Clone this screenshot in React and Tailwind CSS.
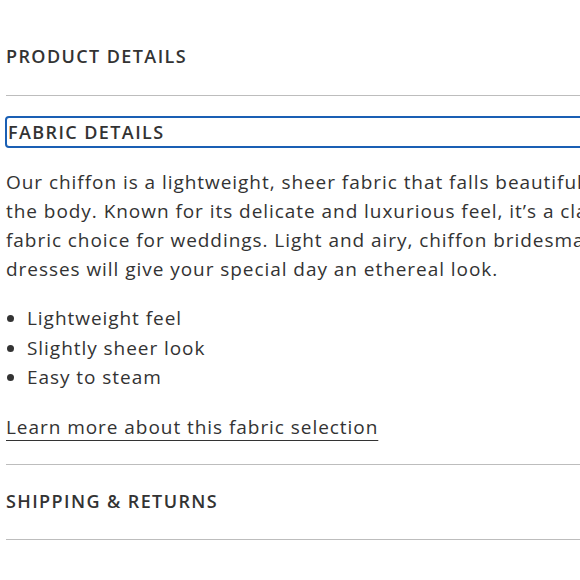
import React from "react";

const heading = "text-[18px] leading-[24px] font-semibold tracking-[1.4px] text-[#333]";

const App = () => {
    return (
        <div className="w-[580px] h-[580px] overflow-hidden bg-white" style={{ fontFamily: "'Open Sans', sans-serif" }}>
            <div className="w-[660px] pl-[6px]">
                <div className="pt-[44px] pb-[27px] border-b border-[#bdbdbd]">
                    <h2 className={heading}>PRODUCT DETAILS</h2>
                </div>

                <div className="pt-[20px]">
                    <button className="w-full text-left -ml-[1px] pl-[1px] h-[32px] border-2 border-[#1a5fb4] rounded-[4px] flex items-center">
                        <span className={heading}>FABRIC DETAILS</span>
                    </button>
                </div>

                <div className="pt-[20px] pb-[22px] border-b border-[#bdbdbd] text-[19px] leading-[29px] tracking-[0.95px] text-[#333]">
                    <p>
                        Our chiffon is a lightweight, sheer fabric that falls beautifully on<br />
                        the body. Known for its delicate and luxurious feel, it’s a classic<br />
                        fabric choice for weddings. Light and airy, chiffon bridesmaid<br />
                        dresses will give your special day an ethereal look.
                    </p>
                    <ul className="mt-[20px] list-disc pl-[21px] leading-[29.5px]">
                        <li>Lightweight feel</li>
                        <li>Slightly sheer look</li>
                        <li>Easy to steam</li>
                    </ul>
                    <a href="#" className="inline-block mt-[20px] underline underline-offset-[6px] decoration-[1px]">
                        Learn more about this fabric selection
                    </a>
                </div>

                <div className="pt-[24px] pb-[26px] border-b border-[#bdbdbd]">
                    <h2 className={heading}>SHIPPING &amp; RETURNS</h2>
                </div>
            </div>
        </div>
    );
};

export default App;
